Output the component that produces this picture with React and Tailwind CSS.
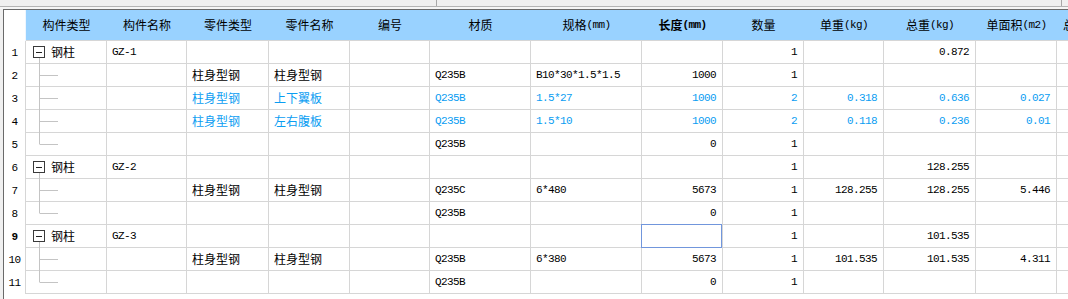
import React from 'react';

const W = ['w-[81px]','w-[80px]','w-[82px]','w-[81px]','w-[80px]','w-[101px]','w-[111px]','w-[81px]','w-[81px]','w-[80px]','w-[92px]','w-[81px]','w-[72px]'];
const CJK = "font-['Noto_Sans_CJK_SC',sans-serif] text-[12px] leading-[14px]";
const MONO = "font-['Liberation_Mono','DejaVu_Sans_Mono',monospace] text-[11px] leading-[14px] tracking-[-0.6px]";

const HEADERS = [
  ['构件类型'], ['构件名称'], ['零件类型'], ['零件名称'], ['编号'], ['材质'],
  ['规格', '(mm)'], ['长度', '(mm)', true], ['数量'], ['单重', '(kg)'], ['总重', '(kg)'],
  ['单面积', '(m2)'], ['总面积', '(m2)'],
];

const ROWS = [
  { t: 'p', c: { 1: 'GZ-1', 8: '1', 10: '0.872' } },
  { t: 'c', c: { 2: '柱身型钢', 3: '柱身型钢', 5: 'Q235B', 6: 'B10*30*1.5*1.5', 7: '1000', 8: '1' } },
  { t: 'c', blue: true, c: { 2: '柱身型钢', 3: '上下翼板', 5: 'Q235B', 6: '1.5*27', 7: '1000', 8: '2', 9: '0.318', 10: '0.636', 11: '0.027' } },
  { t: 'c', blue: true, c: { 2: '柱身型钢', 3: '左右腹板', 5: 'Q235B', 6: '1.5*10', 7: '1000', 8: '2', 9: '0.118', 10: '0.236', 11: '0.01' } },
  { t: 'l', c: { 5: 'Q235B', 7: '0', 8: '1' } },
  { t: 'p', c: { 1: 'GZ-2', 8: '1', 10: '128.255' } },
  { t: 'c', c: { 2: '柱身型钢', 3: '柱身型钢', 5: 'Q235C', 6: '6*480', 7: '5673', 8: '1', 9: '128.255', 10: '128.255', 11: '5.446' } },
  { t: 'l', c: { 5: 'Q235B', 7: '0', 8: '1' } },
  { t: 'p', bold: true, sel: 7, c: { 1: 'GZ-3', 8: '1', 10: '101.535' } },
  { t: 'c', c: { 2: '柱身型钢', 3: '柱身型钢', 5: 'Q235B', 6: '6*380', 7: '5673', 8: '1', 9: '101.535', 10: '101.535', 11: '4.311' } },
  { t: 'l', c: { 5: 'Q235B', 7: '0', 8: '1' } },
];

function Tree({ t }) {
  if (t === 'p') {
    return (
      <svg width="20" height="22" className="block shrink-0 overflow-visible">
        <line x1="8.5" y1="17" x2="8.5" y2="23" stroke="#c4c4c4" />
        <rect x="2.5" y="5.5" width="11" height="11" fill="#fff" stroke="#3a3a3a" />
        <line x1="5" y1="11.5" x2="11" y2="11.5" stroke="#222" />
      </svg>
    );
  }
  return (
    <svg width="30" height="22" className="block shrink-0 overflow-visible">
      <line x1="8.5" y1="0" x2="8.5" y2={t === 'l' ? 11.5 : 23} stroke="#c4c4c4" />
      <line x1="9" y1="11.5" x2="27" y2="11.5" stroke="#c4c4c4" />
    </svg>
  );
}

function Row({ row, n }) {
  const color = row.blue ? 'text-[#0a9df2]' : 'text-black';
  return (
    <div className="flex h-[23px]">
      <div className={`w-[22px] shrink-0 border-r border-[#d6d6d6] flex items-center justify-center text-black ${MONO} ${row.bold ? 'font-bold' : ''}`}>
        {n}
      </div>
      {W.map((w, i) => {
        const v = row.c[i];
        const right = i >= 7 && i <= 11;
        const cjk = i === 2 || i === 3;
        return (
          <div
            key={i}
            className={`${w} shrink-0 relative border-r border-b border-[#d6d6d6] flex items-center ${right ? 'justify-end pr-[6px]' : 'pl-[5px]'} ${i === 0 ? 'pl-0' : ''} ${color}`}
          >
            {i === 0 && <Tree t={row.t} />}
            {i === 0 && row.t === 'p' && <span className={`${CJK} text-black`}>钢柱</span>}
            {i !== 0 && v && <span className={cjk ? CJK : MONO}>{v}</span>}
            {row.sel === i && (
              <div className="absolute -left-px -top-px right-0 -bottom-px border border-[#7196dc]" />
            )}
          </div>
        );
      })}
    </div>
  );
}

export default function App() {
  return (
    <div className="w-[1068px] h-[299px] bg-[#f0f0f0] overflow-hidden flex flex-col">
      <div className="h-[6px] shrink-0 flex">
        <div className="w-[436px] shrink-0" />
        <div className="w-px bg-[#a8a8a8]" />
        <div className="w-[624px] shrink-0" />
        <div className="w-px bg-[#a8a8a8]" />
      </div>
      <div className="h-px shrink-0 bg-[#b4b4b4]" />
      <div className="h-[2px] shrink-0 bg-[#f6f6f6]" />
      <div className="ml-[3px] flex-1 bg-white border-t border-l border-[#6a6a6a] overflow-hidden">
        <div className="flex h-[31px]">
          <div className="w-[22px] shrink-0 border-r border-[#eef6ff] bg-white" />
          <div className="flex bg-[#99d2ff] border-b border-[#d6d6d6]">
            {W.map((w, i) => {
              const h = HEADERS[i];
              return (
                <div key={i} className={`${w} shrink-0 flex items-center justify-center text-black ${h[2] ? 'font-bold' : ''}`}>
                  <span className={CJK}>{h[0]}</span>
                  {h[1] && <span className={`${MONO} ${h[2] ? 'font-bold' : ''}`}>{h[1]}</span>}
                </div>
              );
            })}
          </div>
        </div>
        {ROWS.map((r, i) => (
          <Row key={i} row={r} n={i + 1} />
        ))}
      </div>
    </div>
  );
}
